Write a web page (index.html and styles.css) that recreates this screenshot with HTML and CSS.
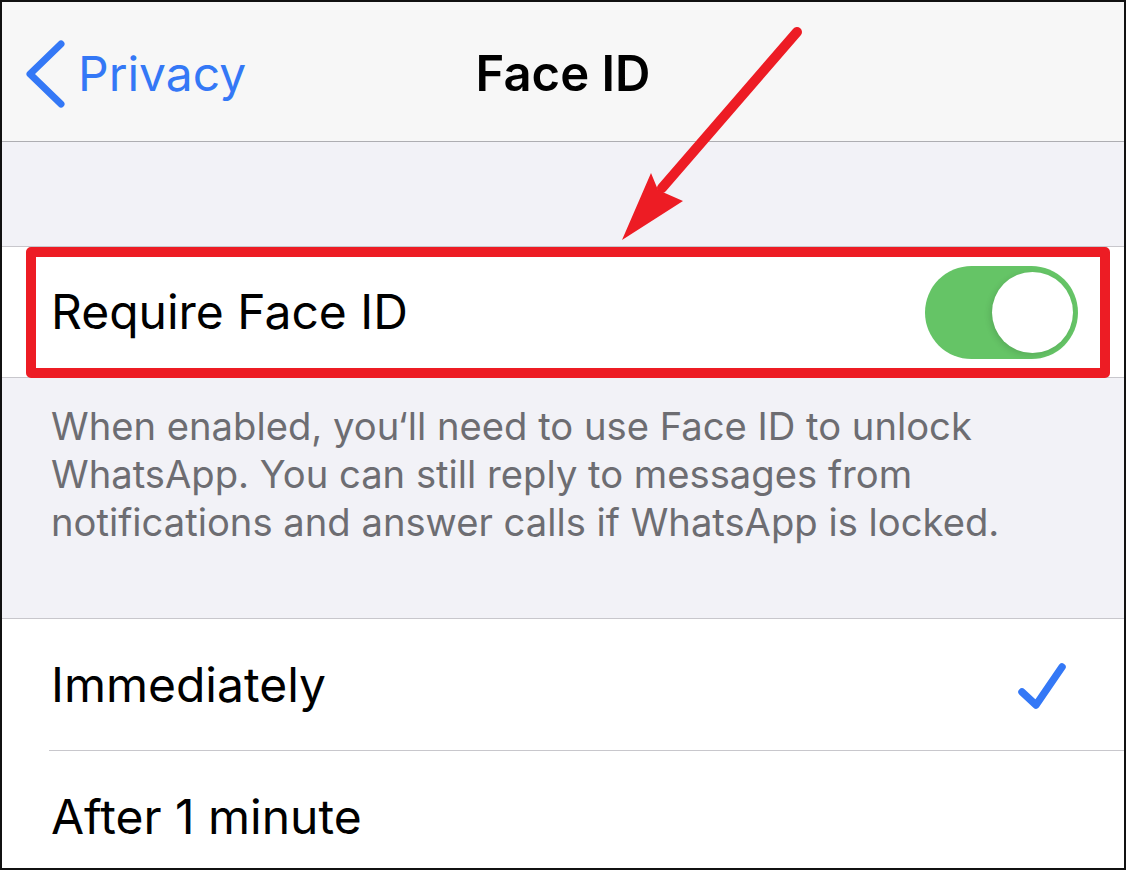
FILE: index.html
```html
<!DOCTYPE html>
<html>
<head>
<meta charset="utf-8">
<link rel="stylesheet" href="styles.css">
</head>
<body>
<div class="frame">
  <header class="nav">
    <div class="back">
      <svg class="chev" width="42" height="70" viewBox="0 0 42 70"><path d="M36 5 L5 35 L36 65" fill="none" stroke="#3478f6" stroke-width="7" stroke-linecap="round" stroke-linejoin="round"/></svg>
      <span class="back-label">Privacy</span>
    </div>
    <div class="title">Face ID</div>
    <div></div>
  </header>
  <div class="spacer"></div>
  <div class="row row-toggle">
    <span class="label">Require Face ID</span>
    <div class="switch"><div class="knob"></div></div>
  </div>
  <div class="footer">When enabled, you‘ll need to use Face ID to unlock WhatsApp. You can still reply to messages from notifications and answer calls if WhatsApp is locked.</div>
  <div class="group">
    <div class="row row-opt">
      <span class="label">Immediately</span>
      <svg class="check" width="50" height="50" viewBox="0 0 50 50"><path d="M4 32 L18 45 L44 7" fill="none" stroke="#3478f6" stroke-width="7.5" stroke-linecap="round" stroke-linejoin="round"/></svg>
    </div>
    <div class="sep"></div>
    <div class="row row-opt">
      <span class="label">After 1 minute</span>
    </div>
  </div>
  <div class="highlight"></div>
  <svg class="arrow" width="1126" height="870" viewBox="0 0 1126 870">
    <line x1="797" y1="32" x2="662" y2="188" stroke="#ed1c24" stroke-width="10" stroke-linecap="round"/>
    <polygon points="622,240 651,173 658,190 683,201" fill="#ed1c24"/>
  </svg>
</div>
</body>
</html>
```
FILE: styles.css
```css
html, body {
  margin: 0;
  padding: 0;
}
body {
  font-family: Inter, "Noto Sans", "Liberation Sans", sans-serif;
  background: #fff;
}
.frame {
  position: relative;
  box-sizing: border-box;
  width: 1126px;
  height: 870px;
  border: 2px solid #111;
  overflow: hidden;
  background: #fff;
}
.nav {
  box-sizing: border-box;
  height: 140px;
  background: #f7f7f7;
  border-bottom: 1px solid #aeaeb2;
  display: grid;
  grid-template-columns: 1fr auto 1fr;
  align-items: center;
  padding-top: 4px;
}
.back {
  display: flex;
  align-items: center;
  padding-left: 23px;
  gap: 11px;
}
.chev {
  display: block;
}
.back-label {
  color: #3478f6;
  font-size: 48px;
  line-height: 60px;
}
.title {
  font-size: 49px;
  font-weight: 600;
  line-height: 60px;
  color: #000;
}
.spacer {
  height: 104px;
  background: #f2f2f7;
  border-bottom: 1px solid #c8c7cc;
}
.row {
  height: 130px;
  display: flex;
  align-items: center;
  justify-content: space-between;
  padding: 0 46px 0 49px;
  background: #fff;
}
.row-toggle {
  border-bottom: 1px solid #c8c7cc;
}
.label {
  font-size: 48px;
  line-height: 60px;
  color: #000;
}
.switch {
  box-sizing: border-box;
  width: 153px;
  height: 93px;
  border-radius: 47px;
  background: #65c466;
  padding: 6px 5px;
  display: flex;
  justify-content: flex-end;
}
.knob {
  width: 81px;
  height: 81px;
  border-radius: 50%;
  background: #fff;
  box-shadow: -2px 2px 6px rgba(0,0,0,0.12);
}
.footer {
  box-sizing: border-box;
  height: 241px;
  background: #f2f2f7;
  border-bottom: 1px solid #c8c7cc;
  padding: 24px 60px 0 49px;
  font-size: 38.2px;
  line-height: 48px;
  color: #6d6d72;
}
.group {
  background: #fff;
}
.row-opt {
  height: 131px;
  padding-right: 56px;
}
.sep {
  height: 1px;
  background: #c8c7cc;
  margin-left: 47px;
}
.check {
  display: block;
}
.highlight {
  position: absolute;
  left: 24px;
  top: 245px;
  width: 1084px;
  height: 131px;
  box-sizing: border-box;
  border: 10px solid #ed1c24;
  border-radius: 5px;
}
.arrow {
  position: absolute;
  left: -2px;
  top: -2px;
}
```
